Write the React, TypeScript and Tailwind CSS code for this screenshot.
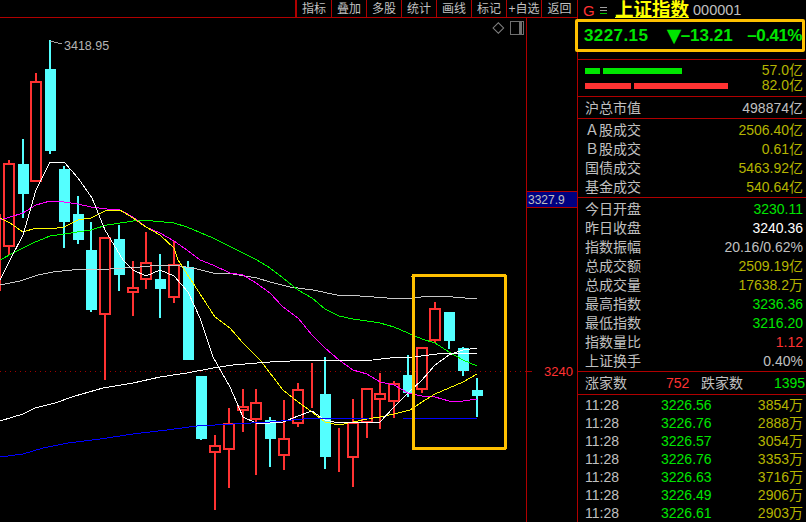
const fontStack = '[font-family:"Liberation_Sans","Noto_Sans_CJK_SC",sans-serif]';

// [center x, top, bottom, wick top, wick bottom]
const redCandles = [
  [-5, 214, 291, 214, 291],
  [9, 163, 247, 160, 255],
  [36, 81, 182, 73, 182],
  [105, 237, 315, 237, 380],
  [133, 287, 293, 261, 316],
  [146, 262, 280, 232, 289],
  [174, 264, 298, 241, 303],
  [215, 445, 453, 435, 510],
  [229, 423, 450, 408, 488],
  [243, 406, 411, 389, 432],
  [256, 402, 420, 389, 475],
  [284, 438, 456, 400, 470],
  [298, 389, 424, 383, 427],
  [312, 385, 387, 363, 408],
  [339, 452, 454, 428, 472],
  [353, 422, 458, 399, 487],
  [367, 388, 423, 388, 438],
  [380, 393, 400, 373, 429],
  [394, 383, 402, 381, 418],
  [422, 347, 390, 347, 393],
  [435, 308, 341, 302, 343],
];

const cyanCandles = [
  [23, 164, 194, 139, 218],
  [50, 69, 151, 40, 154],
  [64, 169, 222, 166, 248],
  [78, 214, 240, 196, 244],
  [91, 250, 310, 222, 312],
  [119, 239, 275, 225, 291],
  [160, 279, 289, 254, 318],
  [188, 267, 360, 261, 360],
  [201, 376, 439, 376, 440],
  [270, 420, 439, 417, 467],
  [325, 394, 457, 357, 469],
  [408, 375, 393, 355, 397],
  [449, 312, 341, 312, 349],
  [463, 348, 371, 347, 376],
  [477, 390, 396, 378, 417],
];

const lines = [
  {
    color: '#c8c8c8',
    points: '0,285 20,281 38,275 53,272 72,270 110,269 140,267 160,265 180,266 197,269 213,273 233,274 257,278 270,282 290,287 313,290 337,295 360,296 387,298 413,298 430,296 453,297 477,299',
  },
  {
    color: '#00ff00',
    points: '0,260 13,253 33,243 50,236 64,234 91,230 107,225 127,222 140,220 153,221 174,223 187,227 213,238 233,248 257,260 270,268 283,278 298,290 312,298 325,309 339,316 353,319 367,321 380,323 394,327 408,333 422,339 435,343 449,352 463,360 477,366',
  },
  {
    color: '#ff00ff',
    points: '0,220 10,217 23,213 36,205 50,201 64,202 78,204 91,207 107,209 120,210 133,217 146,227 160,233 174,241 187,250 200,260 213,265 230,273 243,275 256,283 270,293 283,307 298,318 312,335 325,348 339,360 353,370 367,374 380,382 394,385 408,393 422,396 435,397 449,401 463,401 477,399',
  },
  {
    color: '#ffff00',
    points: '0,218 10,223 23,232 36,228 50,229 64,227 78,220 91,218 107,210 120,210 133,218 146,227 160,235 174,248 178,260 193,283 215,317 230,328 243,343 260,360 270,373 283,390 298,402 312,412 325,422 339,425 353,422 367,419 380,417 394,414 410,410 422,402 435,394 449,388 463,382 477,374',
  },
  {
    color: '#ffffff',
    points: '0,280 10,260 23,235 36,190 50,162 64,162 78,178 92,198 105,230 123,260 133,270 146,276 160,270 174,276 188,292 200,318 213,357 230,387 243,417 256,423 270,423 283,422 298,416 312,411 325,420 339,423 380,422 394,407 408,393 422,380 435,365 449,355 463,350 477,348',
  },
  {
    color: '#ffffff',
    points: '0,421 23,414 35,408 55,403 75,396 103,388 133,383 160,377 187,373 213,368 233,365 257,363 270,362 290,361 373,360 390,358 413,357 437,354 457,353 477,353',
  },
  {
    color: '#0000ff',
    points: '0,457 23,454 43,448 68,443 100,439 133,434 167,430 197,426 233,424 270,422 303,419 370,418 403,418 477,418',
  },
];

const toolbar = ['指标', '叠加', '多股', '统计', '画线', '标记', '+自选', '返回'];

const turnover = [
  ['Ａ股成交', '2506.40亿'],
  ['Ｂ股成交', '0.61亿'],
  ['国债成交', '5463.92亿'],
  ['基金成交', '540.64亿'],
];

const stats = [
  ['今日开盘', '3230.11', 'text-[#00e600]'],
  ['昨日收盘', '3240.36', 'text-white'],
  ['指数振幅', '20.16/0.62%', 'text-[#c0c0c0]'],
  ['总成交额', '2509.19亿', 'text-[#b4b400]'],
  ['总成交量', '17638.2万', 'text-[#b4b400]'],
  ['最高指数', '3236.36', 'text-[#00e600]'],
  ['最低指数', '3216.20', 'text-[#00e600]'],
  ['指数量比', '1.12', 'text-[#ff3232]'],
  ['上证换手', '0.40%', 'text-[#c0c0c0]'],
];

const ticks = [
  ['11:28', '3226.56', '3854万'],
  ['11:28', '3226.76', '2888万'],
  ['11:28', '3226.57', '3054万'],
  ['11:28', '3226.76', '3353万'],
  ['11:28', '3226.63', '3716万'],
  ['11:28', '3226.49', '2906万'],
  ['11:28', '3226.61', '2903万'],
];

function Chart() {
  return (
    <svg className="block w-[526px] h-[504px]" viewBox="0 18 526 504" shapeRendering="crispEdges">
      <line x1="0" x2="526" y1="371.5" y2="371.5" stroke="#a00000" strokeDasharray="1 4" />
      {redCandles.map(([x, top, bottom, wickTop, wickBottom]) => (
        <g key={x}>
          <rect x={x - 1} y={wickTop} width="2" height={wickBottom - wickTop} fill="#ff3232" />
          <rect x={x - 5} y={top + 1} width="10" height={Math.max(bottom - top - 2, 0)} fill="#000" stroke="#ff3232" strokeWidth="2" />
        </g>
      ))}
      {cyanCandles.map(([x, top, bottom, wickTop, wickBottom]) => (
        <g key={x} fill="#54ffff">
          <rect x={x - 1} y={wickTop} width="2" height={wickBottom - wickTop} />
          <rect x={x - 5} y={top} width="11" height={bottom - top} />
        </g>
      ))}
      {lines.map((line, i) => (
        <polyline key={i} points={line.points} fill="none" stroke={line.color} strokeWidth="1" />
      ))}
      <polyline points="50,41 62,44" fill="none" stroke="#a0a0a0" />
      <text x="64" y="50" fontSize="12.5" fill="#b4b4b4" fontFamily="Liberation Sans, sans-serif">3418.95</text>
      <rect x="413" y="275.5" width="92.5" height="173" rx="1" fill="none" stroke="#ffc000" strokeWidth="3" />
      <g shapeRendering="auto">
        <rect x="494.5" y="24" width="7.5" height="7.5" transform="rotate(45 498 28)" fill="none" stroke="#808080" />
        <rect x="510.5" y="21.5" width="13" height="13" fill="none" stroke="#707070" />
      </g>
      <rect x="519" y="22" width="3" height="12" fill="#707070" />
    </svg>
  );
}

function Row({ label, value, color }: { label: string; value: string; color: string }) {
  return (
    <div className="flex justify-between items-center h-[19px] pl-[7px] pr-[3px]">
      <span className="text-[#c0c0c0]">{label}</span>
      <span className={color}>{value}</span>
    </div>
  );
}

export default function App() {
  return (
    <div className={`flex w-[806px] h-[522px] bg-black overflow-hidden text-[14px] leading-none ${fontStack}`}>
      <div className="flex flex-col w-[577px] shrink-0">
        <div className="flex justify-end h-[18px] border-b border-[#b00000] text-[12px] text-[#c0c0c0]">
          <div className="flex border-l-2 border-[#b00000]">
            {toolbar.map((item) => (
              <div key={item} className="flex items-center justify-center w-[35px] h-[17px] border-r border-[#b00000] whitespace-nowrap overflow-hidden last:border-r-0">
                {item}
              </div>
            ))}
          </div>
        </div>
        <div className="flex flex-1">
          <Chart />
          <div className="relative w-[51px] border-l border-[#b00000] text-[12px]">
            <div className="absolute left-0 right-0 top-[173px] h-[17px] flex items-center bg-[#000080] border-y border-[#b00000] text-[#c0c0c0] pl-[1px]">
              3327.9
            </div>
            <div className="absolute right-[4px] top-[347px] text-[13px] text-[#ff3232]">3240</div>
            <div className="absolute left-0 w-[5px] top-[353px] h-px bg-[#a00000]" />
          </div>
        </div>
      </div>

      <div className="flex flex-col flex-1 border-l border-[#b00000]">
        <div className="flex items-center h-[19px] pl-[5px] pt-[1px]">
          <span className="text-[#ff3232] text-[15px] w-[11px]">G</span>
          <span className="flex flex-col gap-[2px] w-[7px] ml-[6px]">
            <span className="h-px bg-[#a0a0a0]" />
            <span className="h-px bg-[#a0a0a0]" />
            <span className="h-px bg-[#00c000]" />
          </span>
          <span className="ml-[8px] text-[#ffff00] text-[18.5px] font-bold underline underline-offset-1 whitespace-nowrap">上证指数</span>
          <span className="ml-[4px] text-[#c0c0c0] text-[14.5px]">000001</span>
        </div>
        <div className="relative -ml-[3px] w-[230px] h-[33px] flex items-center border-[3px] border-[#ffc000] rounded-[2px] text-[#00e600] text-[17px] whitespace-nowrap font-bold">
          <span className="ml-[6px] w-[83px] tracking-[0.4px]">3227.15</span>
          <span className="w-[14px] text-[19px] [font-family:'DejaVu_Sans',sans-serif]">▼</span>
          <span className="w-[67px]">–13.21</span>
          <span className="tracking-[-0.5px]">–0.41%</span>
        </div>
        <div className="mt-[7px] h-[38px] border-y border-[#b00000] flex flex-col justify-center pl-[7px] pr-[3px] text-[#b4b400]">
          <div className="flex items-center justify-between h-[15px]">
            <div className="flex gap-[3px]">
              <div className="w-[15px] h-[6px] bg-[#00e600]" />
              <div className="w-[79px] h-[6px] bg-[#00e600]" />
            </div>
            <span className="-mt-[2px]">57.0亿</span>
          </div>
          <div className="flex items-center justify-between h-[15px]">
            <div className="flex gap-[3px]">
              <div className="w-[46px] h-[6px] bg-[#ff3232]" />
              <div className="w-[94px] h-[6px] bg-[#ff3232]" />
            </div>
            <span className="-mt-[2px]">82.0亿</span>
          </div>
        </div>
        <div className="h-[22px] border-b border-[#b00000] flex items-center justify-between pl-[7px] pr-[3px] text-[#c0c0c0]">
          <span>沪总市值</span>
          <span>498874亿</span>
        </div>
        <div className="h-[79px] border-b border-[#b00000] flex flex-col justify-center">
          {turnover.map(([label, value]) => (
            <Row key={label} label={label} value={value} color="text-[#b4b400]" />
          ))}
        </div>
        <div className="h-[174px] border-b border-[#b00000] flex flex-col justify-center">
          {stats.map(([label, value, color]) => (
            <Row key={label} label={label} value={value} color={color} />
          ))}
        </div>
        <div className="h-[23px] border-b border-[#b00000] flex items-center pl-[7px] whitespace-nowrap">
          <span className="text-[#c0c0c0] w-[81px]">涨家数</span>
          <span className="text-[#ff3232] w-[35px]">752</span>
          <span className="text-[#c0c0c0] w-[73px]">跌家数</span>
          <span className="text-[#00e600]">1395</span>
        </div>
        <div className="flex flex-col pt-px">
          {ticks.map(([time, price, volume], i) => (
            <div key={i} className="flex items-center h-[18px] pl-[7px] pr-[3px]">
              <span className="text-[#c0c0c0] w-[76px]">{time}</span>
              <span className="text-[#00e600]">{price}</span>
              <span className="ml-auto text-[#b4b400]">{volume}</span>
            </div>
          ))}
        </div>
      </div>
    </div>
  );
}
